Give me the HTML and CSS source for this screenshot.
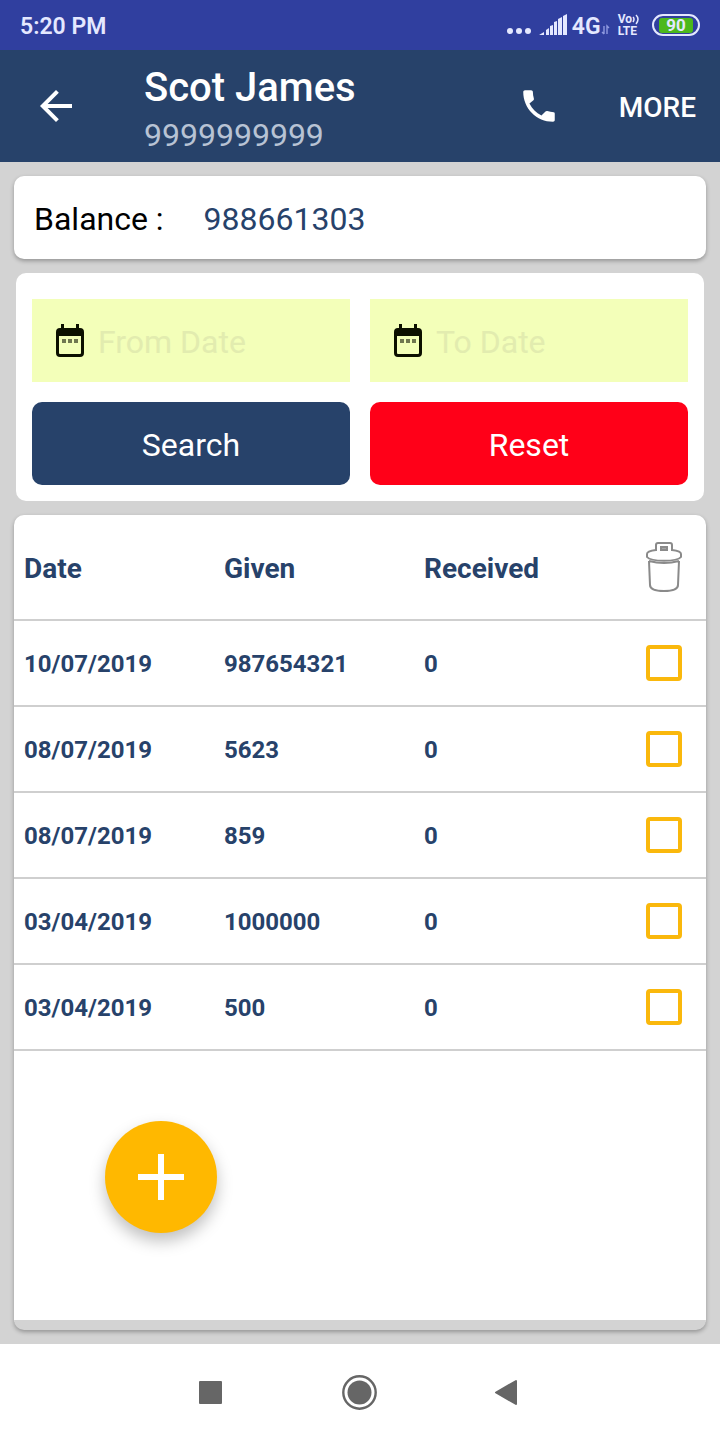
FILE: index.html
```
<!DOCTYPE html>
<html lang="en">
<head>
  <meta charset="UTF-8" />
  <meta name="viewport" content="width=device-width, initial-scale=1.0"/>
  <title>Scot James</title>
  <link rel="stylesheet" href="styles.css">
</head>
<body>
  <!-- STATUS BAR -->
  <div class="status-bar">
    <span class="time">5:20 PM</span>
    <div class="status-icons">
      <svg class="dots" width="24" height="24" viewBox="0 0 24 24" fill="#e4e8ff">
        <circle cx="3" cy="18" r="3"/><circle cx="12" cy="18" r="3"/><circle cx="21" cy="18" r="3"/>
      </svg>
      <svg class="signal" width="28" height="24" viewBox="0 0 28 24" fill="#e4e8ff">
        <path d="M0 22l5-3v3zM7 17l3-2v7H7zM11 13l3-1v10h-3zM15 9l3-1v14h-3zM19 6l4-2v18h-4zM24 3l4-2v21h-4z"/>
      </svg>
      <span class="network">4G</span>
      <svg class="data" width="9" height="24" viewBox="0 0 9 24" fill="none" stroke="#8f9ae0" stroke-width="1.4">
        <path d="M3 21v-8M1 19l2 2M6 21v-8l2 2"/>
      </svg>
      <span class="volte">
        <span class="vo">Vo<svg width="8" height="12" viewBox="0 0 8 12" fill="none" stroke="#e4e8ff" stroke-width="1.5"><path d="M1 4q2 2 0 5M4 2q4 4 0 9"/></svg></span>
        <span>LTE</span>
      </span>
      <span class="battery"><span class="battery-level">90</span></span>
    </div>
  </div>

  <!-- APP BAR -->
  <header class="app-bar">
    <button class="icon-btn" type="button" aria-label="Back">
      <svg width="48" height="48" viewBox="0 0 24 24" fill="#fff"><path d="M20 11H7.830l5.590-5.590L12 4l-8 8 8 8 1.410-1.410L7.830 13H20v-2z"/></svg>
    </button>
    <div class="contact">
      <h1>Scot James</h1>
      <p>9999999999</p>
    </div>
    <button class="icon-btn" type="button" aria-label="Call">
      <svg width="42" height="42" viewBox="0 0 24 24" fill="#fff"><path d="M6.540 10.590c1.560 3.060 3.810 5.310 6.870 6.870l2.290-2.290c.28-.28.69-.37 1.050-.25 1.150.38 2.390.59 3.660.59.560 0 .59.450.59 1v3.490c0 .55-.45 1-1 1C10.610 21 3 13.390 3 4c0-.55.45-1 1-1h3.500c.55 0 1 .45 1 1 0 1.270.2 2.510.57 3.650.11.35.03.75-.25 1.030z"/></svg>
    </button>
    <button class="more-btn" type="button">MORE</button>
  </header>

  <main>
    <section class="card balance">
      <span class="balance-label">Balance :</span>
      <span class="balance-value">988661303</span>
    </section>

    <form class="filter">
      <label class="date-field">
        <svg width="30" height="34" viewBox="0 0 30 34"><path d="M6 0h3v4h12V0h3v4h1q4 0 4 4v21q0 4-4 4H5q-4 0-4-4V8q0-4 4-4h1zM4 12v17q0 1 1 1h20q1 0 1-1V12z" fill="#0c1000" fill-rule="evenodd"/><path d="M7 15h4v4H7zM13 15h4v4h-4zM19 15h4v4h-4z" fill="#6f7750"/></svg>
        <input type="text" name="from_date" placeholder="From Date" aria-label="From Date" />
      </label>
      <label class="date-field">
        <svg width="30" height="34" viewBox="0 0 30 34"><path d="M6 0h3v4h12V0h3v4h1q4 0 4 4v21q0 4-4 4H5q-4 0-4-4V8q0-4 4-4h1zM4 12v17q0 1 1 1h20q1 0 1-1V12z" fill="#0c1000" fill-rule="evenodd"/><path d="M7 15h4v4H7zM13 15h4v4h-4zM19 15h4v4h-4z" fill="#6f7750"/></svg>
        <input type="text" name="to_date" placeholder="To Date" aria-label="To Date" />
      </label>
      <button class="btn search" type="button">Search</button>
      <button class="btn reset" type="reset">Reset</button>
    </form>

    <section class="card records">
      <table>
        <thead>
          <tr>
            <th class="col">Date</th>
            <th class="col">Given</th>
            <th class="col">Received</th>
            <th class="pick">
              <button class="icon-btn" type="button" aria-label="Delete selected">
                <svg width="36" height="50" viewBox="0 0 36 50" fill="none" stroke="#8a8a8a" stroke-width="2">
                  <path d="M10 8V3q0-2 2-2h12q2 0 2 2v5q9 1 9 4v3c-4 5-30 5-34 0v-3q0-3 9-4z"/>
                  <path d="M3 19l1 24q0 6 14 6t14-6l1-24M3 19q15 4 30 0"/>
                  <path d="M15 5h6v3h-6z" fill="#a5a5a5"/>
                </svg>
              </button>
            </th>
          </tr>
        </thead>
        <tbody>
          <tr>
            <td>10/07/2019</td>
            <td>987654321</td>
            <td>0</td>
            <td class="pick"><input type="checkbox" aria-label="Select 10/07/2019, 987654321" /></td>
          </tr>
          <tr>
            <td>08/07/2019</td>
            <td>5623</td>
            <td>0</td>
            <td class="pick"><input type="checkbox" aria-label="Select 08/07/2019, 5623" /></td>
          </tr>
          <tr>
            <td>08/07/2019</td>
            <td>859</td>
            <td>0</td>
            <td class="pick"><input type="checkbox" aria-label="Select 08/07/2019, 859" /></td>
          </tr>
          <tr>
            <td>03/04/2019</td>
            <td>1000000</td>
            <td>0</td>
            <td class="pick"><input type="checkbox" aria-label="Select 03/04/2019, 1000000" /></td>
          </tr>
          <tr>
            <td>03/04/2019</td>
            <td>500</td>
            <td>0</td>
            <td class="pick"><input type="checkbox" aria-label="Select 03/04/2019, 500" /></td>
          </tr>
        </tbody>
      </table>
      <button class="fab" type="button" aria-label="Add record">
        <svg width="48" height="48" viewBox="0 0 48 48" fill="#fff"><path d="M21 1h6v20h20v6H27v20h-6V27H1v-6h20z"/></svg>
      </button>
    </section>
  </main>

  <!-- SYSTEM NAVIGATION -->
  <nav class="nav-bar">
    <button class="icon-btn" type="button" aria-label="Recent apps">
      <svg width="48" height="48" viewBox="0 0 48 48" fill="#666"><rect x="13" y="13" width="23" height="23" rx="1"/></svg>
    </button>
    <button class="icon-btn" type="button" aria-label="Home">
      <svg width="48" height="48" viewBox="0 0 48 48" fill="#666"><circle cx="23.500" cy="24.500" r="12"/><circle cx="23.500" cy="24.500" r="16.200" fill="none" stroke="#666" stroke-width="2.400"/></svg>
    </button>
    <button class="icon-btn" type="button" aria-label="Back">
      <svg width="48" height="48" viewBox="0 0 48 48" fill="#666" stroke="#666" stroke-width="2" stroke-linejoin="round"><path d="M30 13v23L10 24.500z"/></svg>
    </button>
  </nav>
</body>
</html>
```
FILE: styles.css
```
* {
  box-sizing: border-box;
}

body {
  font-family: Roboto, sans-serif;
  background: #d3d3d3;
  margin: 0;
  min-height: 100vh;
  display: flex;
  flex-direction: column;
}

button {
  font-family: inherit;
  border: none;
  padding: 0;
  cursor: pointer;
}

svg {
  display: block;
}

.icon-btn {
  background: none;
  display: block;
}

/* status bar */
.status-bar {
  display: flex;
  justify-content: space-between;
  align-items: center;
  height: 50px;
  padding: 0 20px;
  background: #303f9f;
  color: #e4e8ff;
}

.time,
.network {
  padding-top: 2px;
  font-size: 23px;
  font-weight: 600;
}

.status-icons {
  display: flex;
  align-items: center;
}

.signal {
  margin: 0 5px 0 8px;
}

.volte {
  display: flex;
  flex-direction: column;
  margin: 0 12px 0 8px;
  font-size: 12px;
  font-weight: 700;
  line-height: 12px;
}

.vo {
  display: flex;
}

.battery {
  width: 48px;
  height: 22px;
  padding: 2px 5px;
  border: 2px solid #e4e8ff;
  border-radius: 11px;
}

.battery-level {
  display: block;
  background: #4cb81c;
  border-radius: 3px;
  font-size: 17px;
  font-weight: 700;
  line-height: 15px;
  text-align: center;
}

/* app bar */
.app-bar {
  display: flex;
  align-items: center;
  height: 112px;
  padding: 0 24px 0 32px;
  background: #27426a;
  color: #fff;
}

.contact {
  flex: 1;
  margin-left: 64px;
  padding-top: 10px;
}

.contact h1 {
  margin: 0;
  font-size: 40px;
  font-weight: 500;
  line-height: 48px;
}

.contact p {
  margin: 0;
  font-size: 32px;
  line-height: 46px;
  color: #b8c3d4;
}

.more-btn {
  margin-left: 59px;
  padding-top: 2px;
  background: none;
  color: #fff;
  font-size: 28px;
  font-weight: 500;
}

/* cards */
main {
  flex: 1;
  display: flex;
  flex-direction: column;
  gap: 14px;
  padding: 14px;
}

.card {
  background: #fff;
  border-radius: 10px;
  box-shadow: 0 2px 4px rgba(0, 0, 0, 0.3);
}

.balance {
  display: flex;
  align-items: center;
  gap: 40px;
  height: 83px;
  padding: 2px 20px 0;
  font-size: 32px;
}

.balance-label {
  color: #000;
}

.balance-value {
  color: #27426a;
}

.filter {
  display: grid;
  grid-template-columns: repeat(2, minmax(0, 1fr));
  grid-auto-rows: 83px;
  gap: 20px;
  margin: 0 2px;
  padding: 26px 16px 16px;
  background: #fff;
  border-radius: 10px;
}

.date-field {
  display: flex;
  align-items: center;
  gap: 13px;
  padding: 0 23px;
  background: #f3ffb9;
}

.date-field svg {
  flex: none;
}

.date-field input {
  flex: 1;
  width: 100%;
  min-width: 0;
  padding: 2px 0 0;
  border: none;
  outline: none;
  background: none;
  font-family: inherit;
  font-size: 32px;
  color: #27426a;
}

.date-field input::placeholder {
  color: #e2ecaf;
  opacity: 1;
}

.btn {
  border-radius: 10px;
  padding-top: 2px;
  font-size: 32px;
  color: #fff;
}

.search {
  background: #27426a;
}

.reset {
  background: #ff0018;
}

/* records */
.records {
  flex: 1;
  position: relative;
  min-height: 815px;
  border-bottom: 10px solid #d3d3d3;
}

table {
  width: 100%;
  border-collapse: separate;
  border-spacing: 0;
  table-layout: fixed;
  color: #27426a;
}

th, td {
  height: 86px;
  padding: 2px 0 0 10px;
  border-bottom: 2px solid #cfcfcf;
  text-align: left;
  font-size: 24px;
  font-weight: 700;
}

th {
  height: 106px;
  font-size: 28px;
}

.col {
  width: 200px;
}

.pick {
  padding: 0 24px 0 0;
}

.pick input,
.pick .icon-btn {
  margin: 0 0 0 auto;
}

.pick input {
  display: block;
  appearance: none;
  width: 36px;
  height: 36px;
  border: 4px solid #fab80c;
  border-radius: 4px;
}

.pick input:checked {
  background: #fab80c;
}

.fab {
  position: absolute;
  left: 91px;
  bottom: 87px;
  display: flex;
  align-items: center;
  justify-content: center;
  width: 112px;
  height: 112px;
  border-radius: 50%;
  background: #ffb800;
  box-shadow: 0 8px 16px rgba(0, 0, 0, 0.25);
}

/* system navigation */
.nav-bar {
  display: flex;
  justify-content: center;
  align-items: center;
  gap: 102px;
  height: 96px;
  background: #fff;
}
```
